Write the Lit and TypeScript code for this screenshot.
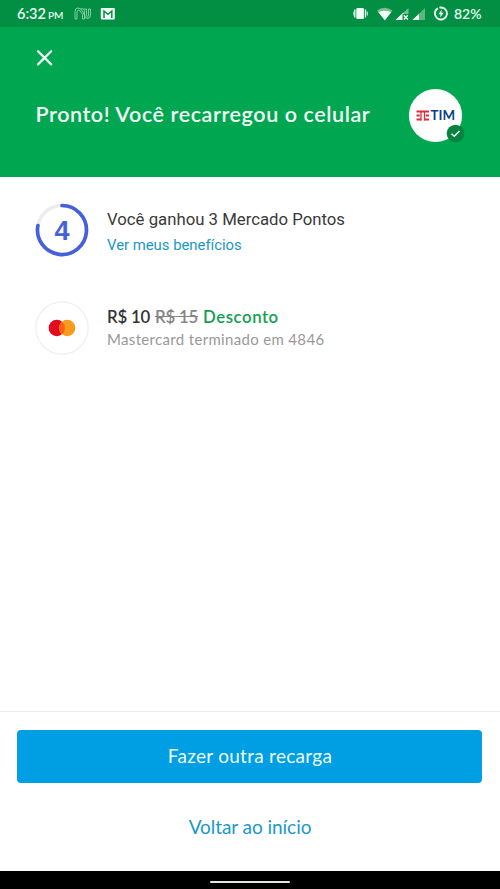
import { LitElement, html, css } from "lit";
import { customElement } from "lit/decorators.js";

@customElement("status-bar")
class StatusBar extends LitElement {
  static styles = css`
    :host { display: flex; align-items: center; justify-content: space-between; height: 27px;
      box-sizing: border-box; padding: 0 18px 0 17px; background: #028f43; color: #e9fff1;
      font-family: Lato, sans-serif; }
    .side { display: flex; align-items: center; height: 27px; }
    .time { font-size: 14.5px; font-weight: 600; width: 31px; line-height: 27px; white-space: nowrap; }
    .pm { font-size: 10px; font-weight: 600; width: 26px; padding-top: 2px; }
    .pct { font-size: 14px; font-weight: 600; width: 28px; white-space: nowrap; }
    svg { display: block; }
  `;
  render() {
    return html`
      <div class="side">
        <span class="time">6:32</span><span class="pm">PM</span>
        <svg width="41" height="27" viewBox="74 0 41 27" fill="none">
          <g stroke="#8fd6ab" stroke-width="0.9">
            <path d="M75 19V11.5Q75 8 78 8Q81 8 83 12L84.500 15.500V19H82.500V14.500Q80.500 10 78.500 10Q77 10 77 12.500V19Z"/>
            <path d="M80.500 9Q84.500 7.500 84.500 12V15Q84.500 18.500 87.500 18.500Q90.500 18.500 90.500 15V9H88.500V15Q88.500 17 87.500 17Q86.500 17 86.500 15V9H84"/>
          </g>
          <rect x="100.800" y="8" width="14" height="11.500" rx="1" fill="#f2fff7"/>
          <path d="M104 18V11L107.900 14.300L111.800 11V18" stroke="#028f43" stroke-width="1.500"/>
        </svg>
      </div>
      <div class="side">
        <svg width="101" height="27" viewBox="353 0 101 27">
          <g fill="#effff4">
            <rect x="356.300" y="8" width="7.600" height="11" rx="1"/>
            <path d="M354.200 9.500H355.500V17.500H354.200ZM364.800 9.500H366.100V17.500H364.800ZM352.700 11.500H353.600V15.500H352.700ZM366.700 11.500H367.700V15.500H366.700Z"/>
          </g>
          <path d="M377 10.500Q384.500 5 392.500 10.500L384.800 20.300Z" fill="#73c18f"/>
          <path d="M378.300 12.200Q384.500 9.500 391.200 12.200L384.800 20.300Z" fill="#f4fff7"/>
          <path d="M408.500 8V20H395.500Z" fill="#73c18f"/>
          <path d="M403.500 12.500V20H395.500Z" fill="#f4fff7"/>
          <path d="M402.500 14H409.500V20.500H402.500Z" fill="#028f43"/>
          <path d="M403.800 15.200L407.800 19.400M407.800 15.200L403.800 19.400" stroke="#f4fff7" stroke-width="1.400"/>
          <path d="M425 8V20H412.500Z" fill="#5fb57f"/>
          <path d="M419 13.700V20H412.500Z" fill="#f4fff7"/>
          <circle cx="441" cy="13.500" r="6" fill="none" stroke="#f4fff7" stroke-width="1.800" stroke-dasharray="35 2.700" transform="rotate(-105 441 13.500)"/>
          <path d="M441.800 9.500L438.300 14.300H440.600L440.200 17.500L443.700 12.700H441.300Z" fill="#f4fff7"/>
        </svg>
        <span class="pct">82%</span>
      </div>`;
  }
}

@customElement("success-header")
class SuccessHeader extends LitElement {
  static styles = css`
    :host { display: block; height: 150px; background: #00a650; color: #f3fff7;
      font-family: Lato, sans-serif; box-sizing: border-box; padding: 21px 36px 0; }
    svg { display: block; }
    .row { display: flex; align-items: center; justify-content: space-between; margin-top: 20px; }
    .title { font-size: 21.5px; font-weight: 600; letter-spacing: 0.58px; white-space: nowrap; line-height: 26px;
      margin: 0 0 4px -0.500px; }
    .logo { display: block; margin-right: -2px; }
    .tim { font: 700 13.500px Lato, sans-serif; }
  `;
  render() {
    return html`
      <svg width="18" height="20" viewBox="0 0 18 20" stroke="#f3fff7" stroke-width="2.200" stroke-linecap="round">
        <path d="M2 3.200L15.200 16.400M15.200 3.200L2 16.400"/>
      </svg>
      <div class="row">
        <span class="title">Pronto! Você recarregou o celular</span>
        <svg class="logo" width="58" height="56" viewBox="408 87 58 56">
          <circle cx="435.500" cy="114.500" r="26.600" fill="#fff"/>
          <g stroke="#d8303c" fill="none">
            <path stroke-width="1.900" d="M416.500 110.500H429M416.500 114.500H419.800M425.700 114.500H429M416.500 118.500H421.200M424.300 118.500H429"/>
            <path stroke-width="1.300" d="M421 110.500V119.400M424.500 110.500V119.400"/>
          </g>
          <text class="tim" x="430.500" y="119.200" fill="#0b3f8c" textLength="24.500" lengthAdjust="spacingAndGlyphs">TIM</text>
          <circle cx="455.500" cy="132.500" r="8.800" fill="#088141"/>
          <path d="M451.500 132.700L454.300 135.300L459.500 130" fill="none" stroke="#effff4" stroke-width="1.500"/>
        </svg>
      </div>`;
  }
}

@customElement("app-root")
class AppRoot extends LitElement {
  static styles = css`
    :host { display: flex; flex-direction: column; width: 500px; height: 889px; background: #fff;
      font-family: Lato, sans-serif; overflow: hidden; }
    .content { flex: 1; padding: 26px 35px 0; }
    .item { display: flex; align-items: center; height: 54px; margin-bottom: 44px; gap: 18px; white-space: nowrap; }
    .icon { display: block; flex: none; }
    .four { font: 700 27px "Liberation Sans", Arial, sans-serif; }
    .lines { display: flex; flex-direction: column; }
    .points { font: 16.750px/24px Roboto, sans-serif; color: #3a3a3a; margin-top: 4px; }
    .link { font: 14.850px/24px Roboto, sans-serif; color: #1a98c8; margin-top: 2px; }
    .price { display: flex; font-size: 16.800px; line-height: 24px; font-weight: 600; color: #333; }
    .now, .old { width: 43px; margin-right: 5px; letter-spacing: -0.200px; }
    .old { color: #858585; text-decoration: line-through; }
    .off { color: #14a050; letter-spacing: 0.550px; }
    .card { font-size: 15px; line-height: 22px; color: #999; letter-spacing: 0.330px; margin: -1px 0 1px 0; }
    .actions { height: 160px; border-top: 1px solid #ececec; box-sizing: border-box; padding: 18px 18px 0 17px; text-align: center; }
    .primary, .secondary { display: block; width: 100%; border: 0; font: 400 19px Lato, sans-serif; }
    .primary { height: 53px; border-radius: 4px; background: #009ee3; color: #edfcff; padding: 0 0 2px 1px; letter-spacing: 0.280px; }
    .secondary { height: 40px; margin-top: 24px; padding: 0 0 2px 1px; background: none; color: #1a98c8; letter-spacing: -0.050px; }
    .nav { height: 18px; background: #000; display: flex; justify-content: center; align-items: center; }
    .pill { width: 80px; height: 2px; border-radius: 1px; background: #e4e4e4; margin-top: 3px; }
  `;
  render() {
    return html`
      <status-bar></status-bar>
      <success-header></success-header>
      <div class="content">
        <div class="item">
          <svg class="icon" width="54" height="54" viewBox="0 0 54 54" fill="none">
            <circle cx="27" cy="27" r="24.500" stroke="#ededed" stroke-width="3.500"/>
            <path d="M27 2.500A24.500 24.500 0 1 1 2.900 22.500" stroke="#4560da" stroke-width="3.700" stroke-linecap="round"/>
            <text class="four" x="27" y="36.500" text-anchor="middle" fill="#4560da">4</text>
          </svg>
          <div class="lines">
            <span class="points">Você ganhou 3 Mercado Pontos</span>
            <span class="link">Ver meus benefícios</span>
          </div>
        </div>
        <div class="item">
          <svg class="icon" width="54" height="54" viewBox="0 0 54 54">
            <circle cx="27" cy="27" r="26.200" fill="#fff" stroke="#efefef" stroke-width="1.200"/>
            <circle cx="21.800" cy="27" r="8.200" fill="#e30b20"/>
            <circle cx="32.200" cy="27" r="8.200" fill="#f79b1c"/>
            <path d="M27 20.660A8.200 8.200 0 0 1 27 33.340A8.200 8.200 0 0 1 27 20.660Z" fill="#f9601a"/>
          </svg>
          <div class="lines">
            <div class="price"><span class="now">R$ 10</span><span class="old">R$ 15</span><span class="off">Desconto</span></div>
            <span class="card">Mastercard terminado em 4846</span>
          </div>
        </div>
      </div>
      <div class="actions">
        <button class="primary">Fazer outra recarga</button>
        <button class="secondary">Voltar ao início</button>
      </div>
      <div class="nav"><div class="pill"></div></div>`;
  }
}
